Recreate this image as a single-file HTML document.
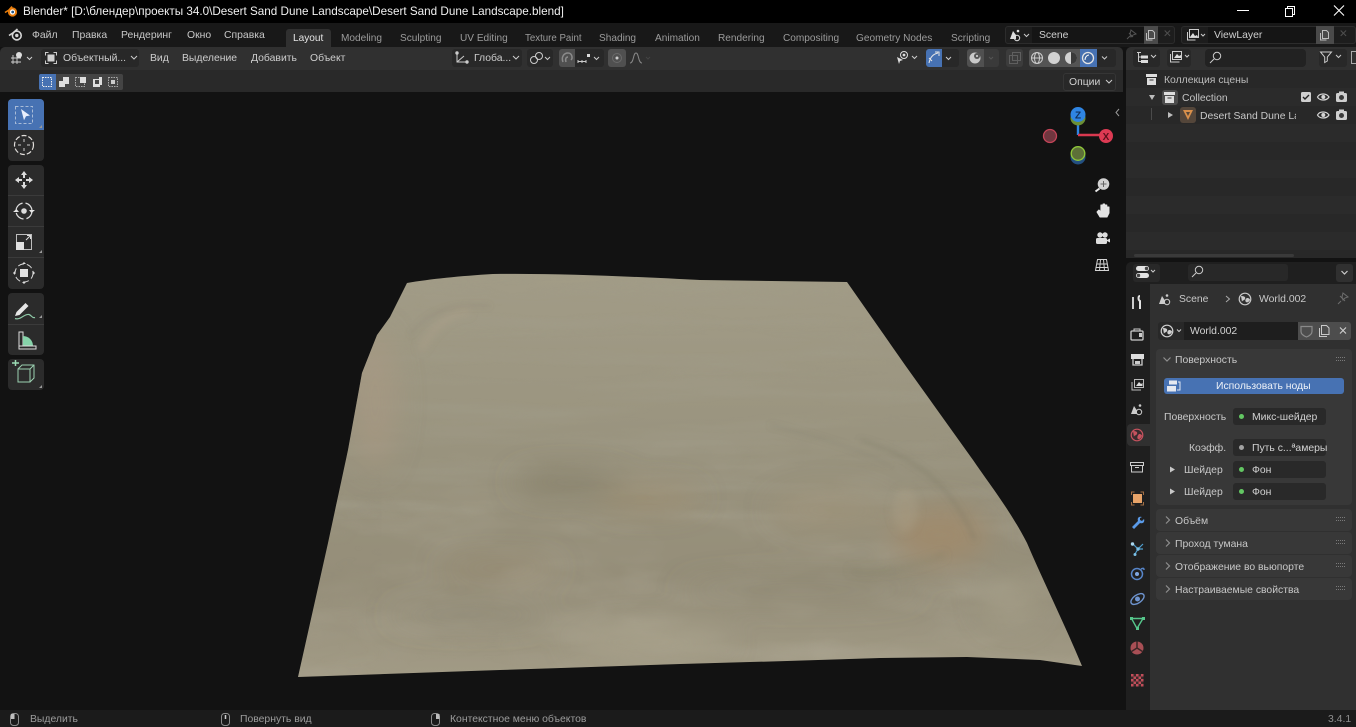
<!DOCTYPE html>
<html><head><meta charset="utf-8"><title>Blender</title>
<style>
html,body{margin:0;padding:0;background:#121212;width:1356px;height:727px;overflow:hidden}
body{position:relative;font-family:"Liberation Sans","Noto Sans CJK SC",sans-serif;font-size:10.4px;color:#cfcfcf}
.b{position:absolute;box-sizing:border-box}
.t{position:absolute;line-height:14px;height:14px;white-space:nowrap;margin-top:1px}
.w{font-size:10.1px;top:31px;color:#9b9b9b}
svg{position:absolute;overflow:visible}
</style></head><body>

<!-- 3D terrain -->
<svg style="left:0;top:0" width="1356" height="727" viewBox="0 0 1356 727">
<defs>
<clipPath id="c"><path d="M407 283C430 279 460 276 493 274C560 273 640 277 700 280L847 282L905 365L973 460C990 485 1010 510 1027 543C1045 585 1065 625 1082 666L1040 660L967 657L880 658L787 661L680 664L500 670L298 677L328 543L348 450L362 373L377 335L390 317Z"/></clipPath>
<filter id="s1" x="0" y="0" width="100%" height="100%"><feTurbulence type="fractalNoise" baseFrequency=".005 .06" numOctaves="4" seed="7"/><feColorMatrix values="0 0 0 0 .36 0 0 0 0 .34 0 0 0 0 .26 1.700 0 0 0 -.72"/><feGaussianBlur stdDeviation="1.200 .6"/></filter>
<filter id="s2" x="0" y="0" width="100%" height="100%"><feTurbulence type="fractalNoise" baseFrequency=".008 .028" numOctaves="4" seed="12"/><feColorMatrix values="0 0 0 0 .72 0 0 0 0 .69 0 0 0 0 .59 1.600 0 0 0 -.72"/><feGaussianBlur stdDeviation="2 1.500"/></filter>
<filter id="s3" x="0" y="0" width="100%" height="100%"><feTurbulence type="fractalNoise" baseFrequency=".012 .035" numOctaves="4" seed="25"/><feColorMatrix values="0 0 0 0 .42 0 0 0 0 .39 0 0 0 0 .31 1.700 0 0 0 -.78"/><feGaussianBlur stdDeviation="2 1.500"/></filter>
<filter id="bl"><feGaussianBlur stdDeviation="14"/></filter>
<filter id="bl2"><feGaussianBlur stdDeviation="4"/></filter>
<filter id="bl3"><feGaussianBlur stdDeviation="3"/></filter>
<linearGradient id="g" x1="0" y1="0" x2="0" y2="1"><stop offset="0" stop-color="#a29c87"/><stop offset=".45" stop-color="#99937e"/><stop offset=".75" stop-color="#958e79"/><stop offset="1" stop-color="#a29b86"/></linearGradient>
</defs>
<g clip-path="url(#c)">
<rect x="290" y="270" width="800" height="410" fill="url(#g)"/>
<rect x="290" y="270" width="800" height="250" filter="url(#s1)" opacity=".55"/>
<rect x="290" y="440" width="800" height="240" filter="url(#s3)" opacity=".25"/>
<rect x="290" y="500" width="800" height="180" filter="url(#s2)" opacity=".18"/>
<g filter="url(#bl)">
<ellipse cx="375" cy="400" rx="20" ry="70" fill="#aa9a84" opacity=".6"/>
<ellipse cx="940" cy="535" rx="48" ry="28" fill="#a18a68" opacity=".75"/>
<ellipse cx="830" cy="510" rx="60" ry="20" fill="#a59478" opacity=".35"/>
<ellipse cx="570" cy="482" rx="55" ry="10" fill="#7d775f" opacity=".7"/>
<ellipse cx="650" cy="498" rx="50" ry="11" fill="#9e8b6a" opacity=".55"/>
<ellipse cx="500" cy="568" rx="60" ry="8" fill="#9c8a6c" opacity=".45"/>
<ellipse cx="470" cy="615" rx="80" ry="10" fill="#857f6d" opacity=".4"/>
<ellipse cx="650" cy="642" rx="80" ry="16" fill="#aea792" opacity=".55"/>
<ellipse cx="1010" cy="600" rx="28" ry="26" fill="#aaa38d" opacity=".5"/>
<ellipse cx="800" cy="590" rx="120" ry="12" fill="#8a846e" opacity=".35"/>
</g>
<g filter="url(#bl2)">
<path d="M420 350C435 325 450 312 470 312" stroke="#b0a18c" stroke-width="6" fill="none" opacity=".5"/>
<ellipse cx="905" cy="510" rx="13" ry="22" fill="#ada088" opacity=".4"/>
<path d="M850 570C880 575 920 565 945 555" stroke="#7f7a64" stroke-width="5" fill="none" opacity=".35"/>
</g>
<g filter="url(#bl3)" fill="none" stroke="#7b7562">
<path d="M410 335C425 315 445 303 490 306" stroke-width="2" opacity=".3"/>
<path d="M860 440C910 455 950 480 975 540" stroke-width="3" opacity=".45"/>
<path d="M770 425C810 435 850 445 890 465" stroke-width="3" opacity=".22"/>
</g>
</g>
</svg>

<!-- Title bar -->
<div class="b" style="left:0;top:0;width:1356px;height:23px;background:#000"></div>
<svg style="left:4px;top:5px" width="14" height="13" viewBox="0 0 14 13"><circle cx="8.500" cy="7" r="4.600" fill="#e87d0d"/><circle cx="8.500" cy="7" r="2.600" fill="#fff"/><circle cx="8.700" cy="7" r="1.400" fill="#265787"/><path d="M1 7.500L5 5 8 1.500" stroke="#e87d0d" stroke-width="1.600" fill="none"/></svg>
<span class="t" style="left:23px;top:4px;font-size:11.7px;color:#f0f0f0">Blender* [D:\блендер\проекты 34.0\Desert Sand Dune Landscape\Desert Sand Dune Landscape.blend]</span>
<svg style="left:1230px;top:0" width="126" height="23" viewBox="0 0 126 23" fill="none" stroke="#fff"><path d="M7 10.500h12"/><path d="M55.500 8.500h7v8h-7zM57.500 8.500v-2h7v8h-2"/><path d="M104 5.500l10 10M114 5.500l-10 10" stroke-width="1.100"/></svg>

<!-- Top bar -->
<div class="b" style="left:0;top:23px;width:1356px;height:24px;background:#181818"></div>
<svg style="left:8px;top:27px" width="15" height="15" viewBox="0 0 15 15"><circle cx="8.800" cy="8.500" r="4.400" fill="none" stroke="#d6d6d6" stroke-width="1.600"/><circle cx="8.800" cy="8.500" r="1.700" fill="#d6d6d6"/><path d="M1 8.500L5.500 5.500 9.500 2" stroke="#d6d6d6" stroke-width="1.600" fill="none"/></svg>
<span class="t" style="left:32px;top:28px;color:#c8c8c8">Файл</span>
<span class="t" style="left:72px;top:28px;color:#c8c8c8">Правка</span>
<span class="t" style="left:121px;top:28px;color:#c8c8c8">Рендеринг</span>
<span class="t" style="left:187px;top:28px;color:#c8c8c8">Окно</span>
<span class="t" style="left:224px;top:28px;color:#c8c8c8">Справка</span>
<div class="b" style="left:286px;top:29px;width:45px;height:18px;background:#303030;border-radius:3px 3px 0 0"></div>
<span class="t w" style="left:293px;color:#e6e6e6">Layout</span>
<span class="t w" style="left:341px">Modeling</span>
<span class="t w" style="left:400px">Sculpting</span>
<span class="t w" style="left:460px">UV Editing</span>
<span class="t w" style="left:525px;font-size:9.7px">Texture Paint</span>
<span class="t w" style="left:599px">Shading</span>
<span class="t w" style="left:655px">Animation</span>
<span class="t w" style="left:718px">Rendering</span>
<span class="t w" style="left:783px">Compositing</span>
<span class="t w" style="left:856px">Geometry Nodes</span>
<span class="t w" style="left:951px">Scripting</span>

<!-- Scene selector -->
<div class="b" style="left:1005px;top:26px;width:170px;height:18px;background:#1d1d1d;border:1px solid #2c2c2c;border-radius:3px"></div>
<div class="b" style="left:1032px;top:27px;width:112px;height:16px;background:#151515"></div>
<span class="t" style="left:1039px;top:28px;color:#d0d0d0">Scene</span>
<svg style="left:1009px;top:28px" width="22" height="14" viewBox="0 0 22 14"><path d="M1 11L4 3l3 4v4z" fill="#ddd"/><circle cx="8" cy="10" r="2.700" fill="none" stroke="#ddd"/><circle cx="9" cy="3" r="1.300" fill="#ddd"/><path d="M15 6l2.500 2.500L20 6" stroke="#ccc" fill="none"/></svg>
<svg style="left:1124px;top:28px" width="14" height="14" viewBox="0 0 14 14" fill="none" stroke="#555"><path d="M3 11l3-3M5 5l4 4M7 2l5 4-3 1-2 2-1-3z"/></svg>
<div class="b" style="left:1144px;top:26px;width:14px;height:18px;background:#4a4a4a"></div>
<svg style="left:1144px;top:28px" width="14" height="14" viewBox="0 0 14 14" fill="none" stroke="#bdbdbd"><path d="M4.500 2.500h4l2 2v6h-6zM2.500 5v7h6"/></svg>
<span class="t" style="left:1163px;top:27px;color:#4e4e4e">✕</span>

<div class="b" style="left:1181px;top:26px;width:175px;height:18px;background:#1d1d1d;border:1px solid #2c2c2c;border-radius:3px"></div>
<div class="b" style="left:1208px;top:27px;width:108px;height:16px;background:#151515"></div>
<span class="t" style="left:1214px;top:28px;color:#d0d0d0">ViewLayer</span>
<svg style="left:1185px;top:28px" width="22" height="14" viewBox="0 0 22 14" fill="none" stroke="#ccc"><path d="M4.500 1.500h9v8h-9z"/><path d="M2.500 4v8h8"/><path d="M5 9l3-4 2 3 2-1 1 2z" fill="#ddd" stroke="none"/><path d="M16 6l2 2 2-2"/></svg>
<div class="b" style="left:1316px;top:26px;width:18px;height:18px;background:#4a4a4a"></div>
<svg style="left:1318px;top:28px" width="14" height="14" viewBox="0 0 14 14" fill="none" stroke="#bdbdbd"><path d="M4.500 2.500h4l2 2v6h-6zM2.500 5v7h6"/></svg>
<span class="t" style="left:1339px;top:27px;color:#4e4e4e">✕</span>

<!-- 3D viewport headers -->
<div class="b" style="left:0;top:47px;width:1123px;height:23px;background:#303030;border-radius:5px 5px 0 0"></div>
<div class="b" style="left:0;top:70px;width:1123px;height:22px;background:#292929"></div>

<svg style="left:9px;top:50px" width="27" height="16" viewBox="0 0 27 16" fill="none" stroke="#cfcfcf"><path d="M2 8h10M2 12h10M4 5v9M8 5v9" stroke-width=".9"/><circle cx="10" cy="5" r="3" fill="#ddd" stroke="none"/><path d="M18 7l2.500 2.500L23 7"/></svg>
<div class="b" style="left:41px;top:49px;width:98px;height:18px;background:#282828;border-radius:3px"></div>
<svg style="left:44px;top:51px" width="14" height="14" viewBox="0 0 14 14"><path d="M1.500 4.500v-3h3M9.500 1.500h3v3M12.500 9.500v3h-3M4.500 12.500h-3v-3" fill="none" stroke="#ccc"/><rect x="3.500" y="3.500" width="7" height="7" fill="#d0d0d0"/></svg>
<span class="t" style="left:63px;top:51px;color:#cdcdcd">Объектный...</span>
<svg style="left:130px;top:55px" width="8" height="6" viewBox="0 0 8 6"><path d="M1 1l3 3 3-3" fill="none" stroke="#ccc"/></svg>
<span class="t" style="left:150px;top:51px;color:#cdcdcd">Вид</span>
<span class="t" style="left:182px;top:51px;color:#cdcdcd">Выделение</span>
<span class="t" style="left:251px;top:51px;color:#cdcdcd">Добавить</span>
<span class="t" style="left:310px;top:51px;color:#cdcdcd">Объект</span>

<!-- mode buttons row -->
<div class="b" style="left:39px;top:74px;width:84px;height:16px;background:#444;border-radius:2px"></div>
<div class="b" style="left:39px;top:74px;width:17px;height:16px;background:#4772b3;border-radius:2px 0 0 2px"></div>
<svg style="left:39px;top:74px" width="84" height="16" viewBox="0 0 84 16">
<rect x="3.500" y="3.500" width="9" height="9" fill="none" stroke="#eee" stroke-dasharray="1.500 1"/>
<path d="M20 7h4V3h6v7h-4v3h-6z" fill="#ddd"/>
<rect x="36.500" y="3.500" width="9" height="9" fill="none" stroke="#aaa" stroke-dasharray="1.500 1"/><path d="M41 3h6v6h-6z" fill="#ddd"/>
<path d="M54 5h6V3h3v8h-2v2h-7z" fill="#ddd"/><rect x="56" y="6" width="4" height="4" fill="#444"/>
<rect x="69.500" y="3.500" width="9" height="9" fill="none" stroke="#aaa" stroke-dasharray="1.500 1"/><rect x="72" y="6" width="4" height="4" fill="#ccc"/>
</svg>

<!-- center tools -->
<div class="b" style="left:452px;top:49px;width:70px;height:18px;background:#282828;border-radius:3px"></div>
<svg style="left:454px;top:51px" width="16" height="14" viewBox="0 0 16 14" fill="none" stroke="#ccc"><path d="M3 2v9h10M3 11l7-6"/><circle cx="3" cy="2" r="1.200" fill="#ccc"/><circle cx="13" cy="11" r="1.200" fill="#ccc"/></svg>
<span class="t" style="left:474px;top:51px;color:#cdcdcd">Глоба...</span>
<svg style="left:512px;top:55px" width="8" height="6" viewBox="0 0 8 6"><path d="M1 1l3 3 3-3" fill="none" stroke="#ccc"/></svg>
<div class="b" style="left:527px;top:49px;width:26px;height:18px;background:#282828;border-radius:3px"></div>
<svg style="left:529px;top:51px" width="23" height="14" viewBox="0 0 23 14" fill="none" stroke="#ccc"><circle cx="5" cy="9" r="3.500"/><circle cx="10" cy="5" r="3.500"/><path d="M16 6l2.500 2.500L21 6"/></svg>
<div class="b" style="left:559px;top:49px;width:45px;height:18px;background:#282828;border-radius:3px"></div>
<div class="b" style="left:559px;top:49px;width:16px;height:18px;background:#505050;border-radius:3px 0 0 3px"></div>
<svg style="left:560px;top:51px" width="44" height="14" viewBox="0 0 44 14" fill="none" stroke="#8b8b8b"><path d="M3 11c-2-5 1-9 5-9s5 5 3 7M6 11c-1-3 0-5 2-5" stroke-width="1.500"/><path d="M18 9v3M22 9v3M26 9v3M18 10.500h8" stroke="#ccc"/><rect x="27" y="3" width="3" height="3" fill="#ddd" stroke="none"/><path d="M34 6l2.500 2.500L39 6" stroke="#ccc"/></svg>
<div class="b" style="left:608px;top:49px;width:18px;height:18px;background:#505050;border-radius:3px"></div>
<svg style="left:610px;top:51px" width="44" height="14" viewBox="0 0 44 14" fill="none" stroke="#777"><circle cx="7" cy="7" r="4.500" stroke="#6a6a6a"/><circle cx="7" cy="7" r="1.500" fill="#ccc" stroke="none"/><path d="M20 12C24 12 23 2 26 2s2 10 6 10" stroke="#888"/><path d="M36 6l2 2 2-2" stroke="#444"/></svg>

<!-- right header tools -->
<svg style="left:895px;top:50px" width="28" height="16" viewBox="0 0 28 16"><circle cx="9" cy="5" r="3.500" fill="none" stroke="#ddd"/><circle cx="9" cy="5" r="1.400" fill="#ddd"/><path d="M2 7l6 3-3 1-1 3z" fill="#ddd"/><path d="M17 6l2.500 2.500L22 6" fill="none" stroke="#ccc"/></svg>
<div class="b" style="left:926px;top:49px;width:16px;height:18px;background:#4772b3;border-radius:3px 0 0 3px"></div>
<div class="b" style="left:942px;top:49px;width:17px;height:18px;background:#282828;border-radius:0 3px 3px 0"></div>
<svg style="left:926px;top:49px" width="34" height="18" viewBox="0 0 34 18" fill="none" stroke="#e6e6e6"><path d="M3 14C4 9 7 5 12 4M9 3h4v4M3 9l3 3"/><path d="M20 8l2.500 2.500L25 8" stroke="#ccc"/></svg>
<div class="b" style="left:967px;top:49px;width:17px;height:18px;background:#505050;border-radius:3px 0 0 3px"></div>
<div class="b" style="left:984px;top:49px;width:15px;height:18px;background:#3a3a3a;border-radius:0 3px 3px 0"></div>
<svg style="left:967px;top:49px" width="34" height="18" viewBox="0 0 34 18" fill="none"><circle cx="8" cy="9" r="5.500" fill="#c9c9c9"/><circle cx="10" cy="7" r="3" fill="#555"/><circle cx="10" cy="7" r="1" fill="#ddd"/><path d="M22 8l2 2 2-2" stroke="#555"/></svg>
<div class="b" style="left:1006px;top:49px;width:17px;height:18px;background:#3c3c3c;border-radius:3px"></div>
<svg style="left:1008px;top:51px" width="14" height="14" viewBox="0 0 14 14" fill="none" stroke="#5f5f5f"><rect x="1.500" y="4.500" width="8" height="8"/><rect x="4.500" y="1.500" width="8" height="8"/></svg>
<div class="b" style="left:1029px;top:49px;width:51px;height:18px;background:#545454;border-radius:3px 0 0 3px"></div>
<div class="b" style="left:1080px;top:49px;width:17px;height:18px;background:#4772b3"></div>
<div class="b" style="left:1097px;top:49px;width:19px;height:18px;background:#282828;border-radius:0 3px 3px 0"></div>
<svg style="left:1029px;top:49px" width="88" height="18" viewBox="0 0 88 18"><g fill="none" stroke="#ccc"><circle cx="8" cy="9" r="5.500"/><ellipse cx="8" cy="9" rx="2.500" ry="5.500"/><path d="M2.500 9h11"/></g><circle cx="25" cy="9" r="6" fill="#d2d2d2"/><circle cx="42" cy="9" r="6" fill="#d2d2d2"/><path d="M42 3a6 6 0 0 1 6 6 6 6 0 0 1-6 6z" fill="#3a3a3a"/><circle cx="59" cy="9" r="5.500" fill="#3f66a0" stroke="#e4e4e4" stroke-width="1.300"/><path d="M56 11c0-3 2-5 4-5" stroke="#fff" fill="none"/><path d="M73 7.500l2.500 2.500 2.500-2.500" fill="none" stroke="#ccc"/></svg>

<div class="b" style="left:1063px;top:73px;width:53px;height:18px;background:#282828;border:1px solid #353535;border-radius:3px"></div>
<span class="t" style="left:1069px;top:75px;color:#d0d0d0">Опции</span>
<svg style="left:1105px;top:79px" width="8" height="6" viewBox="0 0 8 6"><path d="M1 1l3 3 3-3" fill="none" stroke="#ccc"/></svg>

<!-- Toolbar -->
<div class="b" style="left:8px;top:99px;width:36px;height:62px;background:#2b2b2b;border-radius:4px"></div>
<div class="b" style="left:8px;top:99px;width:36px;height:31px;background:#4772b3;border-radius:4px 4px 0 0"></div>
<div class="b" style="left:8px;top:165px;width:36px;height:124px;background:#2b2b2b;border-radius:4px"></div>
<div class="b" style="left:8px;top:293px;width:36px;height:62px;background:#2b2b2b;border-radius:4px"></div>
<div class="b" style="left:8px;top:359px;width:36px;height:31px;background:#2b2b2b;border-radius:4px"></div>
<svg style="left:8px;top:99px" width="36" height="292" viewBox="8 99 36 292">
<g stroke="#3b3b3b"><path d="M8 195.500h36M8 226.500h36M8 257.500h36M8 324.500h36"/></g>
<rect x="15.500" y="106.500" width="17" height="17" fill="none" stroke="#a9bcd8" stroke-dasharray="3 2"/>
<path d="M21 109l9 6.500-4 .8-2 4z" fill="#e8eefc"/>
<circle cx="24" cy="145" r="9.500" fill="none" stroke="#e2dfdc" stroke-width="1.200" stroke-dasharray="5 2"/>
<path d="M24 139v3M24 148v3M18 145h3M27 145h3" stroke="#ccc"/>
<path d="M24 171l3 4h-2v3h-2v-3h-2zM24 189l3-4h-2v-3h-2v3h-2zM15 180l4-3v2h3v2h-3v2zM33 180l-4-3v2h-3v2h3v2z" fill="#dcdcdc"/>
<circle cx="24" cy="211" r="8" fill="none" stroke="#dcdcdc" stroke-width="1.200" stroke-dasharray="10 3"/>
<circle cx="24" cy="211" r="2.800" fill="#dcdcdc"/>
<path d="M13 212l3.500-3 2.500 3zM35 210l-3.500 3-2.500-3z" fill="#e6e6e6"/>
<rect x="16.500" y="234.500" width="15" height="15" fill="none" stroke="#bdbdbd"/>
<rect x="16" y="242" width="8" height="8" fill="#e0e0e0"/>
<path d="M26 240l4-4M27 235.500h3.500V239" fill="none" stroke="#ddd"/>
<circle cx="24" cy="273" r="9" fill="none" stroke="#dcdcdc" stroke-dasharray="6 3"/>
<rect x="20" y="269" width="8" height="8" fill="#e2e2e2"/>
<path d="M24 262l2 2h-4zM24 284l2-2h-4zM13 273l2 2v-4zM35 273l-2 2v-4z" fill="#ddd"/>
<path d="M15 316l1.500-4 9-9 3 3-9 9z" fill="#e6e6e6"/>
<path d="M15 318.500c6 2 9-5 14-4 3 1 3 4 6 3" fill="none" stroke="#8fc9a7" stroke-width="1.200"/>
<path d="M19 332h4v14h13v3H19z" fill="none" stroke="#ddd"/>
<path d="M23 346v-10a10 10 0 0 1 10 10z" fill="#87d3aa"/>
<path d="M19 346h17" stroke="#ddd"/>
<path d="M12 363h7M15.500 360v6" stroke="#9bdcb4" stroke-width="1.500"/>
<path d="M18 369h12v13H18zM18 369l4-4h12v13l-4 4M30 369l4-4" fill="none" stroke="#9bd0b0"/>
<g fill="#9a9a9a"><path d="M42 125v3h-3zM42 250v3h-3zM42 315v3h-3zM42 385v3h-3z"/></g>
</svg>

<!-- Gizmo + nav -->
<svg style="left:1030px;top:95px" width="100" height="190" viewBox="1030 95 100 190">
<circle cx="1078" cy="157" r="7.500" fill="#234f80"/>
<path d="M1078 120v15" stroke="#2f85e3" stroke-width="2.400"/>
<path d="M1078 135h22" stroke="#d8384f" stroke-width="2.400"/>
<circle cx="1078" cy="118" r="7.500" fill="#6b8f35"/>
<circle cx="1078" cy="114.500" r="7.500" fill="#2f85e3"/>
<text x="1078" y="118.500" font-family="Liberation Sans" font-size="10" font-weight="700" text-anchor="middle" fill="#10305c">Z</text>
<circle cx="1106" cy="136" r="7" fill="#dd3a53"/>
<text x="1106" y="140" font-family="Liberation Sans" font-size="10" font-weight="700" text-anchor="middle" fill="#5c0f1c">X</text>
<circle cx="1050" cy="136" r="6.500" fill="#70363f" stroke="#c44458" stroke-width="1.300"/>
<circle cx="1078" cy="153.500" r="6.800" fill="#5d7038" stroke="#8fc73a" stroke-width="1.400"/>
<path d="M1119 109l-3 3.500 3 3.500" fill="none" stroke="#999"/>
<circle cx="1103.500" cy="184" r="5.800" fill="#d2d2d2"/><path d="M1099.500 188.500l-4 3" stroke="#e8e8e8" stroke-width="2"/><path d="M1103.500 181v6M1100.500 184h6" stroke="#666"/>
<path d="M1097 212l3 5h7l2-4v-6h-1.500v4h-.7v-6h-1.500v5h-.7v-6h-1.500v6h-.7v-5h-1.500v7l-2-2z" fill="#e4e4e4" stroke="#e4e4e4" stroke-linejoin="round"/>
<circle cx="1100" cy="235" r="2.700" fill="#ddd"/><circle cx="1105" cy="235" r="2.700" fill="#ddd"/>
<rect x="1096" y="238" width="11" height="6" rx="1.500" fill="#ddd"/><path d="M1107 240l3-1.500v4l-3-1.500z" fill="#ddd"/>
<path d="M1097.500 259.500h9l2 11h-13zM1096.500 264h11M1095.500 267.500h13M1100.500 259.500l-1 11M1103.500 259.500l1 11" fill="none" stroke="#d4d4d4"/>
</svg>

<!-- Outliner -->
<div class="b" style="left:1126px;top:47px;width:230px;height:23px;background:#303030;border-radius:5px 0 0 0"></div>
<div class="b" style="left:1126px;top:70px;width:230px;height:188px;background:#282828"></div>
<div class="b" style="left:1126px;top:88px;width:230px;height:18px;background:#2b2b2b"></div>
<div class="b" style="left:1126px;top:124px;width:230px;height:18px;background:#2b2b2b"></div>
<div class="b" style="left:1126px;top:160px;width:230px;height:18px;background:#2b2b2b"></div>
<div class="b" style="left:1126px;top:196px;width:230px;height:18px;background:#2b2b2b"></div>
<div class="b" style="left:1126px;top:232px;width:230px;height:18px;background:#2b2b2b"></div>
<div class="b" style="left:1134px;top:254px;width:160px;height:3px;background:#3a3a3a;border-radius:2px"></div>
<div class="b" style="left:1133px;top:49px;width:27px;height:18px;background:#282828;border-radius:3px"></div>
<div class="b" style="left:1167px;top:49px;width:24px;height:18px;background:#282828;border-radius:3px"></div>
<div class="b" style="left:1205px;top:49px;width:101px;height:18px;background:#222;border-radius:4px"></div>
<div class="b" style="left:1319px;top:49px;width:28px;height:18px;background:#282828;border-radius:3px"></div>
<svg style="left:1126px;top:47px" width="230" height="90" viewBox="1126 47 230 90">
<path d="M1137 52.500h4M1138.500 53v8.500h3M1138.500 57h3" fill="none" stroke="#ccc"/><rect x="1141" y="55.500" width="7" height="3" fill="#ddd"/><rect x="1141" y="60" width="7" height="3" fill="#ddd"/>
<path d="M1151 55l2.500 2.500 2.500-2.500" fill="none" stroke="#ccc"/>
<g fill="none" stroke="#ccc"><path d="M1172.500 51.500h9v8h-9zM1170.500 54v8h9"/><path d="M1185 55l2 2 2-2"/></g><path d="M1174 58l3-4 2 2 2-1v3z" fill="#ddd"/>
<circle cx="1217" cy="56" r="3.700" fill="none" stroke="#ccc"/><path d="M1214 59l-4 4" stroke="#ccc"/>
<path d="M1320.500 52h11l-4.200 5v4l-2.600 1.500V57z" fill="none" stroke="#ccc"/><path d="M1336 55l2.500 2.500 2.500-2.500" fill="none" stroke="#ccc"/>
<rect x="1351.500" y="51.500" width="5" height="12" fill="none" stroke="#aaa"/>
<path d="M1146 74h11v3h-11z" fill="#ddd"/><path d="M1147 78h9v7h-9z" fill="#ddd"/><path d="M1149.500 80h4" stroke="#333"/>
<path d="M1149 95l3 5 3-5z" fill="#bdbdbd"/>
<rect x="1162" y="90" width="16" height="15" rx="3" fill="#4c4c4c"/>
<path d="M1164 92h11v3h-11z" fill="#ddd"/><path d="M1165 96h9v7h-9z" fill="#ddd"/><path d="M1167.500 98h4" stroke="#333"/>
<path d="M1151.500 108v12" stroke="#4b4b4b"/>
<path d="M1168 112l5 3-5 3z" fill="#bdbdbd"/>
<rect x="1180" y="107" width="16" height="16" rx="3" fill="#54463a"/>
<path d="M1183 110h10l-5 10z" fill="#d88f4a"/><path d="M1186 112h4l-2 4z" fill="#54463a"/>
<rect x="1301" y="92" width="10" height="10" rx="1.500" fill="#cfcfcf"/><path d="M1303 97l2 2 4-4" fill="none" stroke="#222" stroke-width="1.400"/>
<path d="M1317.500 97c2-4 9-4 11.500 0-2.500 4-9.500 4-11.500 0z" fill="none" stroke="#d6d6d6" stroke-width="1.200"/><circle cx="1323.300" cy="97" r="2" fill="#d6d6d6"/>
<path d="M1317.500 115c2-4 9-4 11.500 0-2.500 4-9.500 4-11.500 0z" fill="none" stroke="#d6d6d6" stroke-width="1.200"/><circle cx="1323.300" cy="115" r="2" fill="#d6d6d6"/>
<rect x="1336" y="93" width="11" height="9" rx="1.500" fill="#cfcfcf"/><rect x="1339" y="91.500" width="5" height="2" fill="#cfcfcf"/><circle cx="1341.500" cy="97.500" r="2.500" fill="#3a3a3a"/>
<rect x="1336" y="111" width="11" height="9" rx="1.500" fill="#cfcfcf"/><rect x="1339" y="109.500" width="5" height="2" fill="#cfcfcf"/><circle cx="1341.500" cy="115.500" r="2.500" fill="#3a3a3a"/>
</svg>
<span class="t" style="left:1164px;top:73px;color:#bcbcbc">Коллекция сцены</span>
<span class="t" style="left:1182px;top:91px;color:#c4c4c4">Collection</span>
<span class="t" style="left:1200px;top:109px;color:#c8c8c8;width:96px;overflow:hidden">Desert Sand Dune Landscape</span>

<!-- Properties -->
<div class="b" style="left:1126px;top:262px;width:230px;height:22px;background:#1f1f1f;border-radius:5px 0 0 0"></div>
<div class="b" style="left:1126px;top:284px;width:24px;height:426px;background:#1f1f1f"></div>
<div class="b" style="left:1150px;top:284px;width:206px;height:426px;background:#303030"></div>
<div class="b" style="left:1133px;top:264px;width:27px;height:18px;background:#282828;border-radius:3px"></div>
<div class="b" style="left:1188px;top:264px;width:100px;height:17px;background:#282828;border-radius:3px"></div>
<div class="b" style="left:1336px;top:264px;width:17px;height:18px;background:#303030;border-radius:3px"></div>
<svg style="left:1126px;top:262px" width="230" height="24" viewBox="1126 262 230 24">
<rect x="1136" y="266" width="13" height="5" rx="2.500" fill="#e2e2e2"/><rect x="1136" y="273" width="13" height="5" rx="2.500" fill="#e2e2e2"/><circle cx="1146.500" cy="268.500" r="1.700" fill="#444"/><circle cx="1138.500" cy="275.500" r="1.700" fill="#444"/>
<path d="M1151 270l2 2 2-2" fill="none" stroke="#ccc"/>
<circle cx="1199" cy="270" r="3.700" fill="none" stroke="#ccc"/><path d="M1196 273l-4 4" stroke="#ccc"/>
<path d="M1341.500 271l3 3 3-3" fill="none" stroke="#ccc" stroke-width="1.200"/>
</svg>
<div class="b" style="left:1127px;top:424px;width:23px;height:22px;background:#303030;border-radius:4px 0 0 4px"></div>
<svg style="left:1126px;top:290px" width="24" height="400" viewBox="1126 290 24 400">
<path d="M1133 297v5M1133 302v7" stroke="#ccc" stroke-width="2"/><path d="M1140 296c-2 0-2 4 0 5v8" fill="none" stroke="#e2e2e2" stroke-width="2"/>
<rect x="1131" y="331" width="12" height="9" rx="1" fill="none" stroke="#ccc" stroke-width="1.300"/><path d="M1134 331v-2h6v2" fill="none" stroke="#ccc"/><rect x="1139" y="333" width="3" height="4" fill="#ccc"/>
<rect x="1131" y="354" width="13" height="5" fill="#ddd"/><path d="M1133 359v6h9v-6" fill="none" stroke="#ccc" stroke-width="1.300"/><rect x="1135" y="361" width="5" height="3" fill="#ccc"/>
<path d="M1134.500 379.500h9v8h-9zM1132 382v8h9" fill="none" stroke="#bbb"/><path d="M1136 386l3-4 2 2 1.500-1v3z" fill="#ddd"/>
<path d="M1131 414l3-8 3 4.500v3.500z" fill="#ccc"/><circle cx="1139" cy="412" r="2.700" fill="none" stroke="#ccc"/><circle cx="1140" cy="405.500" r="1.300" fill="#ccc"/>
<circle cx="1137" cy="435" r="5.800" fill="#3a2b2e" stroke="#c6525e" stroke-width="1.200"/><path d="M1133 431c3 0 5 1 4 3s-3 1-3 3zM1139 434c2 0 3 1 3 2-1 2-3 4-4 3s-1-3 1-5z" fill="#c6525e"/>
<path d="M1130.500 462.500h13v3h-13zM1131.500 465.500v6.500h11v-6.500M1135 467.500h4" fill="none" stroke="#ccc"/>
<rect x="1133" y="494" width="9" height="9" fill="#e8a368"/><path d="M1131.500 495v-3h3M1140.500 492h3v3M1143.500 502v3h-3M1134.500 505h-3v-3" fill="none" stroke="#a26e44"/>
<path d="M1142 517c-3-1-5 1-4 4l-6 6 2 2 6-6c3 1 5-1 4-4l-2 2-2-1v-2z" fill="#5a9ae8"/>
<path d="M1132 543l6 6 5-5M1138 549l-3 5M1138 549h5" fill="none" stroke="#4f9fcf" stroke-width="1.200"/><circle cx="1132.500" cy="544" r="1.700" fill="#a9d6ee"/><circle cx="1138" cy="549" r="1.700" fill="#7bc0e6"/><circle cx="1135" cy="554.500" r="1.500" fill="#7bc0e6"/>
<circle cx="1137" cy="574" r="5.500" fill="none" stroke="#5785c9" stroke-width="1.500"/><circle cx="1137" cy="574" r="2" fill="#7fa6e0"/><path d="M1141 569c2-1 3-1 3 1" fill="none" stroke="#5785c9" stroke-width="1.500"/>
<ellipse cx="1137.500" cy="599" rx="7.500" ry="4" transform="rotate(-35 1137.500 599)" fill="none" stroke="#6e94cf" stroke-width="1.400"/><circle cx="1137.500" cy="599" r="2.500" fill="#6e94cf"/>
<path d="M1131.500 618.500h11.500l-6 10z" fill="none" stroke="#55c58a" stroke-width="1.400"/><g fill="#55c58a"><rect x="1130" y="617" width="3" height="3"/><rect x="1142" y="617" width="3" height="3"/><rect x="1136" y="627" width="3" height="3"/></g>
<circle cx="1137" cy="648" r="6.500" fill="#a84f55"/><path d="M1137 641.500v6.500l-5.500 3.500M1137 648l5.500 3.500" stroke="#3a2626" stroke-width="1.500" fill="none"/>
<rect x="1131" y="674" width="12.500" height="12.500" fill="#3a2a2a"/>
<g fill="#c14d5a"><rect x="1131" y="674" width="2.500" height="2.500"/><rect x="1136" y="674" width="2.500" height="2.500"/><rect x="1141" y="674" width="2.500" height="2.500"/><rect x="1133.500" y="676.500" width="2.500" height="2.500"/><rect x="1138.500" y="676.500" width="2.500" height="2.500"/><rect x="1131" y="679" width="2.500" height="2.500"/><rect x="1136" y="679" width="2.500" height="2.500"/><rect x="1141" y="679" width="2.500" height="2.500"/><rect x="1133.500" y="681.500" width="2.500" height="2.500"/><rect x="1138.500" y="681.500" width="2.500" height="2.500"/><rect x="1131" y="684" width="2.500" height="2.500"/><rect x="1136" y="684" width="2.500" height="2.500"/><rect x="1141" y="684" width="2.500" height="2.500"/></g>
</svg>

<!-- breadcrumbs -->
<svg style="left:1156px;top:290px" width="200" height="50" viewBox="1156 290 200 50">
<path d="M1159 304l3-8 3 4.500v3.500z" fill="#ccc"/><circle cx="1167" cy="302" r="2.700" fill="none" stroke="#ccc"/><circle cx="1167" cy="295.500" r="1.300" fill="#ccc"/>
<path d="M1226 296l3.500 3-3.500 3" fill="none" stroke="#aaa"/>
<circle cx="1245" cy="299" r="5.800" fill="#303030" stroke="#c8c8c8" stroke-width="1.200"/><path d="M1241 296c3 0 5 1 4 3s-3 1-3 3zM1247 298c2 0 3 1 3 2-1 2-3 3-4 2s-1-3 1-4z" fill="#c8c8c8"/>
<path d="M1338 304l3-3M1340 296l5 5M1343 293l5 4-3 1-2 2-1-3z" fill="none" stroke="#6d6d6d"/>
</svg>
<span class="t" style="left:1179px;top:292px;color:#c8c8c8">Scene</span>
<span class="t" style="left:1259px;top:292px;color:#c8c8c8">World.002</span>

<!-- datablock -->
<div class="b" style="left:1158px;top:322px;width:26px;height:18px;background:#282828;border-radius:3px 0 0 3px"></div>
<div class="b" style="left:1184px;top:322px;width:114px;height:18px;background:#1e1e1e"></div>
<div class="b" style="left:1298px;top:322px;width:53px;height:18px;background:#4d4d4d;border-radius:0 3px 3px 0"></div>
<svg style="left:1158px;top:322px" width="194" height="18" viewBox="1158 322 194 18">
<circle cx="1167" cy="331" r="5.800" fill="#282828" stroke="#cfcfcf" stroke-width="1.200"/><path d="M1163 328c3 0 5 1 4 3s-3 1-3 3zM1169 330c2 0 3 1 3 2-1 2-3 3-4 2s-1-3 1-4z" fill="#cfcfcf"/>
<path d="M1177 329.500l2 2 2-2" fill="none" stroke="#ccc"/>
<path d="M1301 326.500h11v5c0 3-3 4.500-5.500 5.500-2.500-1-5.500-2.500-5.500-5.500z" fill="none" stroke="#8a8a8a" stroke-width="1.200"/>
<path d="M1321.500 325.500h5l2.500 2.500v6.500h-7.500zM1319.500 328v8.500h7.500" fill="none" stroke="#c9c9c9"/>
<path d="M1340 327.500l6 6M1346 327.500l-6 6" stroke="#cfcfcf" stroke-width="1.100"/>
</svg>
<span class="t" style="left:1190px;top:324px;color:#d2d2d2">World.002</span>

<!-- Panels -->
<div class="b" style="left:1156px;top:349px;width:196px;height:156px;background:#383838;border-radius:4px"></div>
<div class="b" style="left:1156px;top:509px;width:196px;height:22px;background:#383838;border-radius:4px"></div>
<div class="b" style="left:1156px;top:532px;width:196px;height:22px;background:#383838;border-radius:4px"></div>
<div class="b" style="left:1156px;top:555px;width:196px;height:22px;background:#383838;border-radius:4px"></div>
<div class="b" style="left:1156px;top:578px;width:196px;height:22px;background:#383838;border-radius:4px"></div>
<svg style="left:1156px;top:349px" width="200" height="252" viewBox="1156 349 200 252">
<path d="M1163.500 357.500l3.500 3.500 3.500-3.500" fill="none" stroke="#8f8f8f" stroke-width="1.200"/>
<path d="M1166 516.500l3.500 3.500-3.500 3.500M1166 539.500l3.500 3.500-3.500 3.500M1166 562.500l3.500 3.500-3.500 3.500M1166 585.500l3.500 3.500-3.500 3.500" fill="none" stroke="#8f8f8f" stroke-width="1.200"/>
<g stroke="#7a7a7a" stroke-dasharray="1 1" fill="none"><path d="M1336 357.500h10M1336 360.500h10M1336 517.500h10M1336 520.500h10M1336 540.500h10M1336 543.500h10M1336 563.500h10M1336 566.500h10M1336 586.500h10M1336 589.500h10"/></g>
<path d="M1170 466.500l5 3-5 3zM1170 488.500l5 3-5 3z" fill="#c8c8c8"/>
</svg>
<span class="t" style="left:1175px;top:353px;color:#c8c8c8">Поверхность</span>
<span class="t" style="left:1175px;top:514px;color:#c8c8c8">Объём</span>
<span class="t" style="left:1175px;top:537px;color:#c8c8c8">Проход тумана</span>
<span class="t" style="left:1175px;top:560px;color:#c8c8c8">Отображение во вьюпорте</span>
<span class="t" style="left:1175px;top:583px;color:#c8c8c8">Настраиваемые свойства</span>

<div class="b" style="left:1164px;top:378px;width:180px;height:16px;background:#4772b3;border-radius:3px"></div>
<svg style="left:1166px;top:379px" width="16" height="14" viewBox="0 0 16 14"><path d="M3 1.500h8v4H3zM1 7h9v5.500H1z" fill="#e4e8f0"/><path d="M12 3h2v8h-3" fill="none" stroke="#dfe6f3"/></svg>
<span class="t" style="left:1216px;top:379px;color:#eef2f8">Использовать ноды</span>

<span class="t" style="left:1164px;top:410px;color:#c8c8c8">Поверхность</span>
<span class="t" style="left:1189px;top:441px;color:#c8c8c8">Коэфф.</span>
<span class="t" style="left:1184px;top:463px;color:#c8c8c8">Шейдер</span>
<span class="t" style="left:1184px;top:485px;color:#c8c8c8">Шейдер</span>
<div class="b" style="left:1233px;top:408px;width:93px;height:17px;background:#292929;border-radius:3px"></div>
<div class="b" style="left:1233px;top:439px;width:93px;height:17px;background:#292929;border-radius:3px"></div>
<div class="b" style="left:1233px;top:461px;width:93px;height:17px;background:#292929;border-radius:3px"></div>
<div class="b" style="left:1233px;top:483px;width:93px;height:17px;background:#292929;border-radius:3px"></div>
<div class="b" style="left:1239px;top:414px;width:5px;height:5px;background:#63c763;border-radius:50%"></div>
<div class="b" style="left:1239px;top:445px;width:5px;height:5px;background:#a1a1a1;border-radius:50%"></div>
<div class="b" style="left:1239px;top:467px;width:5px;height:5px;background:#63c763;border-radius:50%"></div>
<div class="b" style="left:1239px;top:489px;width:5px;height:5px;background:#63c763;border-radius:50%"></div>
<span class="t" style="left:1252px;top:410px;color:#d2d2d2">Микс-шейдер</span>
<span class="t" style="left:1252px;top:441px;color:#d2d2d2">Путь с...ªамеры</span>
<span class="t" style="left:1252px;top:463px;color:#d2d2d2">Фон</span>
<span class="t" style="left:1252px;top:485px;color:#d2d2d2">Фон</span>

<!-- Status bar -->
<div class="b" style="left:0;top:710px;width:1356px;height:17px;background:#1b1b1b"></div>
<svg style="left:0;top:710px" width="460" height="17" viewBox="0 0 460 17" fill="none" stroke="#8d8d8d">
<rect x="10.500" y="3.500" width="8" height="12" rx="3"/><path d="M11 4h3.500v5H11z" fill="#bdbdbd" stroke="none"/>
<rect x="221.500" y="3.500" width="8" height="12" rx="3"/><path d="M225.500 5v4" stroke="#d0d0d0" stroke-width="1.500"/>
<rect x="431.500" y="3.500" width="8" height="12" rx="3"/><path d="M436 4h3.500v5H436z" fill="#bdbdbd" stroke="none"/>
</svg>
<span class="t" style="left:30px;top:712px;color:#9c9c9c">Выделить</span>
<span class="t" style="left:240px;top:712px;color:#9c9c9c">Повернуть вид</span>
<span class="t" style="left:450px;top:712px;color:#9c9c9c">Контекстное меню объектов</span>
<span class="t" style="left:1328px;top:712px;color:#8f8f8f">3.4.1</span>
</body></html>
